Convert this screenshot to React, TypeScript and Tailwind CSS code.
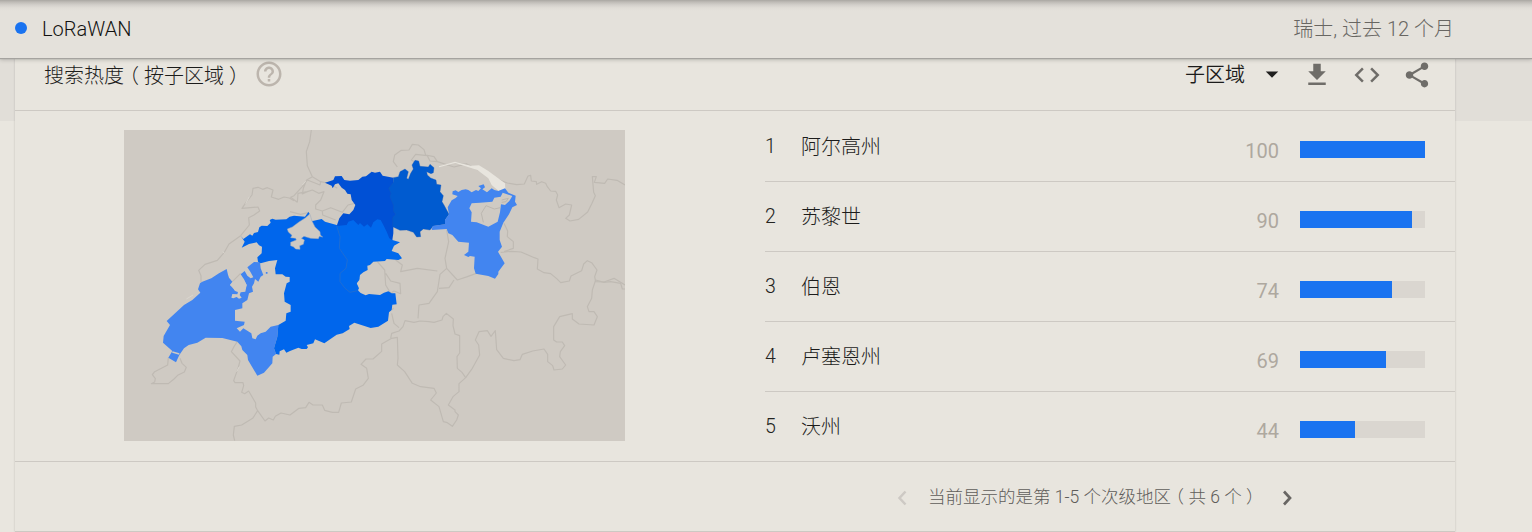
import React from 'react';

const FONT = "font-['Roboto','Noto_Sans_CJK_SC',sans-serif]";

const regions = [
  { rank: 1, name: '阿尔高州', value: 100, bar: 125 },
  { rank: 2, name: '苏黎世', value: 90, bar: 112 },
  { rank: 3, name: '伯恩', value: 74, bar: 92 },
  { rank: 4, name: '卢塞恩州', value: 69, bar: 86 },
  { rank: 5, name: '沃州', value: 44, bar: 55 },
];

function Paren({ children }: { children: string }) {
  return <span className="mx-[0.25em] [font-feature-settings:'halt']">{children}</span>;
}

function Header() {
  return (
    <header className="relative z-10 flex h-[58px] shrink-0 items-center justify-between bg-[linear-gradient(#a9a7a2_0px,#bebbb6_2px,#d3d0cb_5px,#e0ddd7_8px,#e4e1db_11px)] pr-[78px] pb-0.5 pl-[15px] shadow-[0_1px_1px_#a5a39f,0_2px_4px_rgba(0,0,0,0.2)]">
      <div className="flex items-center">
        <span className="size-3 rounded-full bg-[#1a73f0]" />
        <span className="mt-px ml-[15px] text-[20px] leading-6 font-[350] text-[#111110]">LoRaWAN</span>
      </div>
      <span className="mt-px text-[20px] leading-6 font-light text-[#686662]">
        瑞士, 过去 <span className="font-[350]">12</span> 个月
      </span>
    </header>
  );
}

function CardTitle() {
  return (
    <div className="flex h-[53px] shrink-0 items-start border-b border-[#cdc9c3] pl-[29px]">
      <h2 className="mt-[6px] text-[20px] leading-6 font-light whitespace-nowrap text-[#1c1c1b]">
        搜索热度<Paren>（</Paren>按子区域<Paren>）</Paren>
      </h2>
      <svg viewBox="0 0 24 24" className="mt-px ml-[10px] size-[30px] fill-[#bcb5ad]">
        <path d="M11 18h2v-2h-2v2zm1-16C6.480 2 2 6.480 2 12s4.480 10 10 10 10-4.480 10-10S17.520 2 12 2zm0 18c-4.410 0-8-3.590-8-8s3.590-8 8-8 8 3.590 8 8-3.590 8-8 8zm0-14c-2.210 0-4 1.790-4 4h2c0-1.100.9-2 2-2s2 .9 2 2c0 2-3 1.750-3 5h2c0-2.250 3-2.500 3-5 0-2.210-1.790-4-4-4z" />
      </svg>
      <div className="mr-[23px] ml-auto flex">
        <span className="mt-[5px] text-[20px] leading-6 font-[350] text-[#1c1c1b]">子区域</span>
        <svg viewBox="0 0 24 24" className="mt-px ml-3 size-[30px] fill-[#1f1f1e]">
          <path d="M7 10l5 5 5-5z" />
        </svg>
        <svg viewBox="0 0 24 24" className="mt-0.5 ml-[15px] size-[30px] fill-[#6f6d69]">
          <path d="M19 9h-4V3H9v6H5l7 7 7-7zM5 18v2h14v-2H5z" />
        </svg>
        <svg viewBox="0 0 24 24" className="mt-0.5 ml-5 size-[30px] fill-[#6f6d69]">
          <path d="M9.400 16.600L4.800 12l4.600-4.600L8 6l-6 6 6 6 1.400-1.400zm5.200 0l4.600-4.600-4.600-4.600L16 6l6 6-6 6-1.400-1.400z" />
        </svg>
        <svg viewBox="0 0 24 24" className="mt-0.5 ml-5 size-[30px] fill-[#6f6d69]">
          <path d="M18 16.080c-.76 0-1.440.3-1.960.77L8.910 12.700c.05-.23.09-.46.09-.7s-.04-.47-.09-.7l7.050-4.110c.54.5 1.250.81 2.040.81 1.660 0 3-1.340 3-3s-1.340-3-3-3-3 1.340-3 3c0 .24.04.47.09.7L8.040 9.810C7.500 9.310 6.790 9 6 9c-1.660 0-3 1.340-3 3s1.340 3 3 3c.79 0 1.500-.31 2.040-.81l7.120 4.160c-.05.21-.08.43-.08.65 0 1.610 1.310 2.920 2.920 2.920 1.610 0 2.920-1.310 2.920-2.920s-1.310-2.920-2.920-2.920z" />
        </svg>
      </div>
    </div>
  );
}

function RegionMap() {
  return (
    <svg viewBox="0 15 1503 933" className="h-[311px] w-[501px] bg-[#cfcac3]" strokeLinejoin="round">
      {/* neighbouring borders */}
      <g fill="none" stroke="#bfbab3" strokeWidth="3.500">
        <path d="M350 332L315 357L301 382L280 406L243 418L224 436L231 452V473M350 332L376 300L374 278L390 270L407 258L402 246L354 250L366 232L384 210L387 190L402 187L416 193L430 188L447 195L442 216L464 223L480 216L496 219L510 227" />
        <path d="M325 470L350 445M133 698L131 720L92 740L85 749L94 761L92 771L82 776H133L150 762L161 751L181 741L187 727L174 715L168 700" />
        <path d="M340 650L331 663L322 680L348 708L342 730L329 767L333 773H357L359 782L353 802L362 806L374 798L395 834V846L401 857L386 880L353 900L331 904L328 930L332 947M401 857L423 888L434 879L448 885L454 874L471 864L498 870L525 850L545 848L555 832L567 840L595 840L602 856L625 862H644L652 834L682 831L695 792L717 781L733 760L728 730L711 718L726 702H747L773 679V657L803 640L820 637L822 700L820 720L842 740L865 775L890 785L930 790L937 804L920 825L945 845L958 890L970 893L985 904L998 885L1003 870L993 860V855L973 840L987 815L1005 800V776L1025 758L1014 742L1000 730L999 695L1007 684V632L993 627L987 602L988 582L967 565L957 575L954 585L930 592L915 590L888 588L870 592L843 587L837 605L825 618L803 625L800 640" />
        <path d="M803 565L810 595L825 608M805 555L808 548" />
        <path d="M562 15L557 50L547 80L550 122L565 155L590 170L588 180L550 165L535 185L510 212L500 217L520 232M565 155L548 165L538 190L535 207L550 200L565 195L584 205L600 200L590 225L575 240V252L595 258L596 270L635 285M595 258L620 248L655 262L672 240L692 235M590 170L615 175L640 190M498 260L530 268L555 262M520 232L522 205L550 200" />
        <path d="M820 126L808 110L812 90L832 76L855 75L865 58L883 60L900 74L905 90L930 95L940 110L918 108L910 92L875 88L862 105L880 116M940 110L990 126L1030 116" />
        <path d="M993 113L1035 120L1100 155L1150 174L1178 179L1201 177L1212 153L1220 151L1222 168L1237 170L1238 178L1253 170L1265 175L1270 185L1280 198L1295 199L1301 210L1297 225L1305 248L1325 237L1343 240L1336 270L1325 280L1338 288L1364 283L1391 261L1404 235L1414 212L1409 202L1405 155L1417 155L1411 172L1442 175L1451 162L1479 166L1503 180" />
        <path d="M1130 382L1163 379L1191 381L1231 398L1242 402L1240 432L1260 443L1280 446L1298 461L1310 473L1336 468L1341 453L1373 437L1379 417L1390 407L1403 413L1419 435L1412 455L1415 470L1440 471L1470 460L1503 480M1140 295L1151 318L1150 335L1168 350V370L1140 380" />
        <path d="M1415 465L1405 495L1403 520L1390 545L1395 560H1410L1420 575L1410 600L1365 597L1345 582L1345 566L1307 575L1289 605V645L1298 651H1315L1322 662L1309 680L1307 695L1325 720L1315 732L1290 735L1286 722L1271 710V688L1260 672L1226 678L1195 688L1188 704L1170 707L1138 700L1118 674L1114 617L1101 634L1090 617L1065 620L1054 645L1064 660L1067 690L1045 730L1025 758M1415 465L1440 472L1460 470L1490 475L1495 492H1503" />
        <path d="M968 315L974 350L963 400L968 430L948 448L940 500L915 535L885 540L882 580M760 410L782 435L785 480L800 505L810 498L830 506L828 475L800 468L785 445M815 405L835 420L830 440L880 430L940 438M968 430L1000 465L1030 455L1057 445M945 490L975 488L990 465" />
      </g>

      <path d="M945 124L993 110L1040 122L1065 121L1093 138L1143 175L1144 192L1124 198L1103 180L1093 160L1060 135L1025 124L993 114L945 127Z" fill="#e8e5de" />
      <path d="M187 522L207 510M346 725L338 740M296 380L302 385M365 236L376 215M545 169L535 180" fill="none" stroke="#dad6cf" strokeWidth="3" />

      {/* Vaud */}
      <path fill="#4285f0" d="M228 475L235 470L262 460L285 445L308 432L312 449L315 458L325 470L318 480L335 499L350 500L364 492L368 480L360 463L350 448L362 438L370 452L380 460L388 457L379 440L370 427L390 411L408 412L410 430L418 450L410 455L403 470L393 462L390 475L384 485L387 500L375 505L370 525L355 535V550L333 555V587L362 590L360 600L338 610L348 620L358 610L370 617L382 625L385 640L395 643L400 632L410 625L425 620L440 605L463 600L460 635L450 670L456 687L446 695L445 715L420 743L400 752L372 705L370 690L355 675L352 664L340 650L295 639L245 638L220 653L194 660L180 670L166 690L156 712L133 698L145 678L117 653L119 633L138 600L128 588L180 540L205 525L229 503L222 493Z" />
      <path fill="#cfcac3" d="M318 480L330 468L360 466L368 480L364 500L350 502L347 510L353 518L345 521L338 516L328 520L322 518L325 507L340 508L342 501L331 496L328 487Z" />
      <path d="M145 681L166 687" stroke="#cfcac3" strokeWidth="4" />
      <path d="M428 441v5M320 520l4 4" stroke="#4285f0" strokeWidth="5" />

      {/* Bern */}
      <path fill="#0066ec" d="M350 332L358 342L378 328L385 332L390 324L402 321L406 307L413 302L430 303L440 293L437 285L445 281L455 284L487 283L497 275L510 272L543 275L553 261L557 266L545 278L566 288L593 282L603 290L638 300L690 360L690 440L706 460L698 475L703 497L710 504L725 511L735 507L768 510L780 503L793 499L803 505L814 505L818 538L805 539L803 555L795 562L792 587L763 605L740 609L691 593L675 603L677 612L656 625L638 629L601 655L573 643L568 655L548 660L552 667L548 672L533 672L523 668L498 678L487 683L480 673L467 679L466 689L456 687L450 670L460 635L463 600L485 587L487 565L500 560V540L482 530L480 505L488 475L497 470V456L485 455L475 448H455L453 430L460 405L435 408L410 415L402 410L400 397L413 385L414 365L405 361L398 352L375 357L353 368L362 350Z" />
      {/* Solothurn */}
      <path fill="#cfcac3" stroke="#9aa9bd" strokeWidth="1.500" d="M545 278L525 291L505 306L490 312L493 321L504 331L500 338L515 340L517 345L500 352L500 362L508 365L515 372L528 373L527 362L538 358L541 345L532 340L540 334L560 340L583 341L586 334L596 336L589 330L588 320L573 306L564 288L558 268Z" />

      <g transform="translate(498 0)">
        {/* Lucerne */}
        <path fill="#0069ed" d="M140 303L150 335L148 370L172 405L168 430L150 445V470L165 490L180 502L203 497L207 490L200 475L208 465L210 450L220 442L233 435L232 422L240 420L250 410L285 408L290 402L325 405L336 400L325 385L305 378L312 362L330 352L307 345L290 280L210 270Z" />
        <path fill="none" stroke="#2c70c9" strokeWidth="2" d="M140 303L150 335L148 370L172 405L168 430L150 445V470L165 490L180 502L203 497" />
        {/* Aargau */}
        <path fill="#0050d5" d="M105 173L130 165L135 154L155 153L163 165L180 167L205 165L217 155L228 154L245 140L255 143L270 140L278 152L310 158L318 270L310 285V325L307 345L298 340L290 320L280 300L272 285L262 283L250 292L243 308L232 298L222 305L210 294L205 300L190 285L175 290L170 300L140 303L148 280L160 265L178 268L190 255L196 240L185 225L182 208L172 206L165 195L155 188L145 175L135 178L128 190L125 182Z" />
        {/* Zurich */}
        <path fill="#005bd0" stroke="#1759b5" strokeWidth="1" d="M310 158L325 155L330 140L345 132L355 140L350 160L355 163L362 145L370 132L366 120L375 106L386 108L390 124L415 126L420 118L432 128L430 143L423 146L410 140L412 150L422 159L438 165L440 178L453 180L450 200L460 212L456 230L462 240L477 268L465 285L466 298L430 303L420 315L400 312L390 320L392 335L380 336L370 322L350 315L330 316L308 305V277L317 268L311 260L310 240L300 215L303 205L296 190L310 172Z" />
      </g>

      <g transform="translate(993 0)">
        {/* St. Gallen */}
        <path fill="#4285f0" d="M-70 315L-67 303L-30 298L-30 285L-18 268L-22 247L-10 226L2 219L8 213L-8 208L-7 199L2 196L10 201L20 195L32 193L40 195L50 202L63 195L70 198L78 190L70 183L86 178L90 187L82 193L96 202L110 190L118 195L130 198L150 190L160 203L182 212L180 230L186 240L172 247L162 268L145 293L134 320L134 345L141 365L129 380L149 415L130 440V447L120 461L100 453L62 446L57 430L59 395L45 393L40 396L27 390L40 380L42 353L10 350L-8 330L-20 325L-25 312Z" />
        {/* Appenzell */}
        <path fill="#cfcac3" d="M143 203L172 213L163 228L150 240L138 238L135 262L128 290L100 305L65 292L48 290L50 262L43 250L50 235L75 233L112 230L118 218L137 215Z" />
        <path fill="none" stroke="#bcb7b0" strokeWidth="3" d="M85 292L79 265L93 242L118 252L136 248M140 225L160 220L153 230L140 232" />
      </g>
    </svg>
  );
}

function RegionList() {
  return (
    <ol className="w-[690px] shrink-0">
      {regions.map((r) => (
        <li
          key={r.rank}
          className="flex h-[70px] border-b border-[#cdc9c3] first:h-[71px] first:pt-px last:h-[69px] last:border-b-0"
        >
          <span className="mt-[23px] w-9 text-[19.5px] leading-6 font-[350] text-[#242422]">{r.rank}</span>
          <span className="mt-[23px] text-[20px] leading-6 font-light text-[#1c1c1b]">{r.name}</span>
          <span className="mt-[27px] ml-auto text-[20px] leading-6 text-[#aea89f]">{r.value}</span>
          <div className="mt-[29px] mr-[30px] ml-[21px] h-[17px] w-[125px] bg-[#dad6d0]">
            <div className="h-full bg-[#1a73f0]" style={{ width: r.bar }} />
          </div>
        </li>
      ))}
    </ol>
  );
}

function Pager() {
  return (
    <footer className="flex h-[71px] shrink-0 items-center border-y border-[#cdc9c3] pl-[880px]">
      <svg viewBox="0 0 14 20" className="mt-0.5 h-5 w-3.5 fill-none stroke-[#cdc9c4] stroke-[2.500]">
        <path d="M10.500 3.500L4.500 10l6 6.500" />
      </svg>
      <span className="ml-[19px] text-[17.500px] leading-6 font-light whitespace-nowrap text-[#5f5d5a]">
        当前显示的是第 <span className="font-[350]">1-5</span> 个次级地区<Paren>（</Paren>共{' '}
        <span className="font-[350]">6</span> 个<Paren>）</Paren>
      </span>
      <svg viewBox="0 0 14 20" className="mt-0.5 ml-[21px] h-5 w-3.5 fill-none stroke-[#686663] stroke-[2.700]">
        <path d="M4 3.500L10 10l-6 6.500" />
      </svg>
    </footer>
  );
}

export default function App() {
  return (
    <div className={`flex h-[532px] w-[1532px] flex-col overflow-hidden bg-[#e9e6df] ${FONT}`}>
      <Header />
      <main className="flex-1 bg-[linear-gradient(#e1ded8_63px,#e9e6df_63px)] pl-[15px]">
        <section className="flex w-[1440px] flex-col bg-[#e8e5de] shadow-[0_0_2px_rgba(0,0,0,0.18)]">
          <CardTitle />
          <div className="flex h-[350px] shrink-0 justify-between">
            <div className="pt-[19px] pl-[109px]">
              <RegionMap />
            </div>
            <RegionList />
          </div>
          <Pager />
        </section>
      </main>
    </div>
  );
}
